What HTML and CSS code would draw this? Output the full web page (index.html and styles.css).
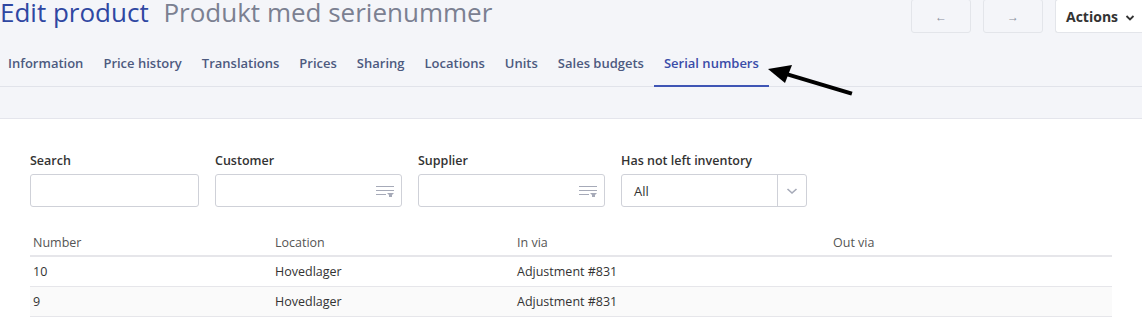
FILE: index.html
```html
<!DOCTYPE html>
<html lang="en">
<head>
    <meta charset="UTF-8">
    <title>Edit product</title>
    <link rel="stylesheet" href="styles.css">
</head>
<body>
    <div class="top">
        <div class="page-head">
            <h1 class="title">Edit product <span class="subtitle">Produkt med serienummer</span></h1>
            <div class="head-buttons">
                <button class="btn btn-nav">&larr;</button>
                <button class="btn btn-nav">&rarr;</button>
                <button class="btn btn-actions">Actions
                    <svg width="10" height="8" viewBox="0 0 10 8"><path d="M1.5 2 L5 5.5 L8.5 2" fill="none" stroke="#333" stroke-width="1.8"/></svg>
                </button>
            </div>
        </div>
        <nav class="tabs">
            <a class="tab">Information</a>
            <a class="tab">Price history</a>
            <a class="tab">Translations</a>
            <a class="tab">Prices</a>
            <a class="tab">Sharing</a>
            <a class="tab">Locations</a>
            <a class="tab">Units</a>
            <a class="tab">Sales budgets</a>
            <a class="tab active">Serial numbers</a>
        </nav>
        <div class="band"></div>
    </div>

    <div class="content">
        <div class="filters">
            <div class="field f-search">
                <label>Search</label>
                <div class="input"></div>
            </div>
            <div class="field f-lookup">
                <label>Customer</label>
                <div class="input">
                    <svg class="lookup-icon" width="18" height="12" viewBox="0 0 18 12"><path d="M0 1.5h18M0 5.5h18M0 9.5h10" stroke="#a6aab8" stroke-width="1"/><path d="M11 8h7l-3.5 3.5z" fill="#a6aab8"/><path d="M13 8h3v4h-3z" fill="#a6aab8"/></svg>
                </div>
            </div>
            <div class="field f-lookup">
                <label>Supplier</label>
                <div class="input">
                    <svg class="lookup-icon" width="18" height="12" viewBox="0 0 18 12"><path d="M0 1.5h18M0 5.5h18M0 9.5h10" stroke="#a6aab8" stroke-width="1"/><path d="M11 8h7l-3.5 3.5z" fill="#a6aab8"/><path d="M13 8h3v4h-3z" fill="#a6aab8"/></svg>
                </div>
            </div>
            <div class="field f-select">
                <label>Has not left inventory</label>
                <div class="input select">
                    <span class="select-value">All</span>
                    <span class="select-arrow">
                        <svg width="12" height="8" viewBox="0 0 12 8"><path d="M1.5 2 L6 6 L10.5 2" fill="none" stroke="#a6aab8" stroke-width="1.6"/></svg>
                    </span>
                </div>
            </div>
        </div>

        <table class="serials">
            <thead>
                <tr>
                    <th class="c-number">Number</th>
                    <th class="c-location">Location</th>
                    <th class="c-in">In via</th>
                    <th class="c-out">Out via</th>
                </tr>
            </thead>
            <tbody>
                <tr>
                    <td>10</td>
                    <td>Hovedlager</td>
                    <td>Adjustment #831</td>
                    <td></td>
                </tr>
                <tr>
                    <td>9</td>
                    <td>Hovedlager</td>
                    <td>Adjustment #831</td>
                    <td></td>
                </tr>
            </tbody>
        </table>
    </div>

    <!-- annotation arrow drawn over the page -->
    <svg class="pointer" width="100" height="40" viewBox="0 0 100 40">
        <path d="M84 31 L20 12" stroke="#000" stroke-width="4" stroke-linecap="square"/>
        <path d="M2 7 L26 3 L19 21 Z" fill="#000"/>
    </svg>
</body>
</html>
```

FILE: styles.css
```css
body {
    margin: 0;
    font-family: "Open Sans", "Noto Sans", sans-serif;
    color: #333;
    background: #fff;
}
.top {
    background: #f4f5f9;
}
.page-head {
    display: flex;
    justify-content: space-between;
    align-items: flex-start;
    height: 42px;
}
.title {
    margin: -6px 0 0 0;
    font-size: 26px;
    font-weight: 400;
    line-height: 36px;
    color: #2f47a2;
    white-space: nowrap;
}
.subtitle {
    margin-left: 8px;
    color: #7b8091;
}
.head-buttons {
    display: flex;
    gap: 12px;
    margin-top: -1px;
}
.btn {
    height: 34px;
    border: 1px solid #e3e5ea;
    border-radius: 3px;
    background: #f4f5f9;
    font-family: inherit;
    cursor: pointer;
}
.btn-nav {
    width: 60px;
    color: #8a8f9c;
    font-size: 12px;
}
.btn-actions {
    width: 87px;
    background: #fff;
    font-size: 14px;
    font-weight: 700;
    color: #333;
    text-align: left;
    padding: 0 0 0 10px;
    border-right: none;
    border-radius: 3px 0 0 3px;
}
.btn-actions svg {
    margin-left: 3px;
}
.tabs {
    display: flex;
    margin-left: -2px;
    border-bottom: 1px solid #e1e3ea;
}
.tab {
    padding: 12px 10px 13px;
    font-size: 13px;
    font-weight: 600;
    color: #4d5a7f;
    border-bottom: 2px solid transparent;
    margin-bottom: -1px;
    white-space: nowrap;
}
.tab.active {
    color: #3a4ca8;
    border-bottom-color: #3f55b5;
}
.band {
    height: 31px;
    border-bottom: 1px solid #e4e5ec;
}
.content {
    padding: 34px 30px 0 30px;
}
.filters {
    display: flex;
    gap: 16px;
}
.field label {
    display: block;
    font-size: 12.5px;
    font-weight: 600;
    color: #333;
    height: 21px;
    line-height: 16px;
}
.input {
    position: relative;
    height: 31px;
    border: 1px solid #cfd1d8;
    border-radius: 3px;
    background: #fff;
}
.f-search { width: 169px; }
.f-lookup { width: 187px; }
.f-select { width: 186px; }
.lookup-icon {
    position: absolute;
    right: 7px;
    top: 10px;
}
.select {
    display: flex;
    align-items: center;
}
.select-value {
    flex: 1;
    padding-left: 12px;
    font-size: 13px;
}
.select-arrow {
    width: 28px;
    height: 100%;
    border-left: 1px solid #cfd1d8;
    display: flex;
    align-items: center;
    justify-content: center;
}
.serials {
    width: 100%;
    margin-top: 22px;
    border-collapse: collapse;
    font-size: 12.5px;
}
.serials th, .serials td {
    text-align: left;
    padding: 0 3px;
    height: 29px;
    border-bottom: 1px solid #e6e6ea;
}
.serials th {
    font-weight: 400;
    color: #555;
    height: 26px;
    vertical-align: middle;
    border-bottom-width: 2px;
}
.serials td {
    color: #333;
}
.serials tbody tr:nth-child(2) td {
    background: #fafafa;
}
.c-number { width: 236px; }
.c-location { width: 236px; }
.c-in { width: 236px; }
.c-out { padding-left: 77px !important; }
.pointer {
    position: absolute;
    left: 766px;
    top: 62px;
}
```
